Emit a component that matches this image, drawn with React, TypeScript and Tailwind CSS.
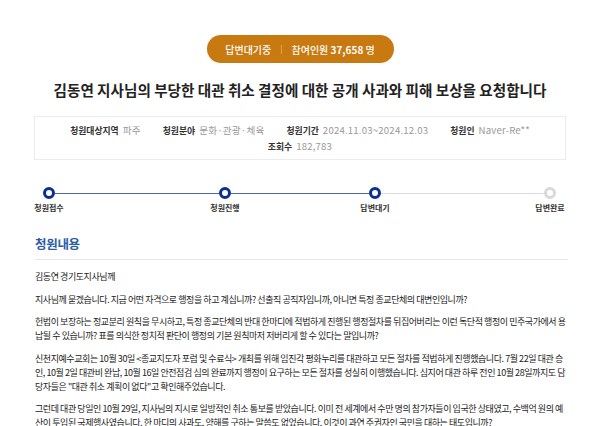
import React from 'react';

const font = { fontFamily: "'Noto Sans CJK KR', 'Noto Sans', sans-serif" };

const info = [
  { label: '청원대상지역', value: '파주' },
  { label: '청원분야', value: '문화·관광·체육' },
  { label: '청원기간', value: '2024.11.03~2024.12.03' },
  { label: '청원인', value: 'Naver-Re**' },
  { label: '조회수', value: '182,783' },
];

const steps = [
  { name: '청원접수', done: true, gap: 'w-[164px]', lineDone: true },
  { name: '청원진행', done: true, gap: 'w-[138px]', lineDone: true },
  { name: '답변대기', done: true, gap: 'w-[163px]', lineDone: false },
  { name: '답변완료', done: false, gap: '', lineDone: false },
];

const paragraphs = [
  '김동연 경기도지사님께',
  '지사님께 묻겠습니다. 지금 어떤 자격으로 행정을 하고 계십니까? 선출직 공직자입니까, 아니면 특정 종교단체의 대변인입니까?',
  '헌법이 보장하는 정교분리 원칙을 무시하고, 특정 종교단체의 반대 한마디에 적법하게 진행된 행정절차를 뒤집어버리는 이런 독단적 행정이 민주국가에서 용납될 수 있습니까? 표를 의식한 정치적 판단이 행정의 기본 원칙마저 저버리게 할 수 있다는 말입니까?',
  '신천지예수교회는 10월 30일 <종교지도자 포럼 및 수료식> 개최를 위해 임진각 평화누리를 대관하고 모든 절차를 적법하게 진행했습니다. 7월 22일 대관 승인, 10월 2일 대관비 완납, 10월 16일 안전점검 심의 완료까지 행정이 요구하는 모든 절차를 성실히 이행했습니다. 심지어 대관 하루 전인 10월 28일까지도 담당자들은 "대관 취소 계획이 없다"고 확인해주었습니다.',
  '그런데 대관 당일인 10월 29일, 지사님의 지시로 일방적인 취소 통보를 받았습니다. 이미 전 세계에서 수만 명의 참가자들이 입국한 상태였고, 수백억 원의 예산이 투입된 국제행사였습니다. 한 마디의 사과도, 양해를 구하는 말씀도 없었습니다. 이것이 과연 주권자인 국민을 대하는 태도입니까?',
];

export default function App() {
  return (
    <div className="h-[426px] w-[600px] overflow-hidden bg-white" style={font}>
      <div className="flex justify-center pt-[35px]">
        <div className="flex h-[28px] w-[187px] items-center justify-center gap-[9px] rounded-full bg-[#c8790f] text-[10px] font-medium text-white">
          <span>답변대기중</span>
          <span className="text-[8px] text-[#e8b878]">|</span>
          <span>
            참여인원 <b className="font-bold">37,658</b> 명
          </span>
        </div>
      </div>

      <h1 className="mt-[17px] text-center text-[14.6px] font-bold leading-[20px] text-[#222]">
        김동연 지사님의 부당한 대관 취소 결정에 대한 공개 사과와 피해 보상을 요청합니다
      </h1>

      <div className="px-[34px]">
        <div className="mt-[16px] flex h-[44px] flex-wrap content-center justify-center gap-x-[22px] gap-y-[1px] border border-[#ececec] px-[30px] leading-[14px]">
          {info.map((it) => (
            <div key={it.label} className="flex items-baseline gap-[4px]">
              <span className="text-[8.8px] font-bold text-[#333]">{it.label}</span>
              <span className="text-[9.6px] tracking-[0.2px] text-[#999]">{it.value}</span>
            </div>
          ))}
        </div>
      </div>

      <div className="mt-[27px] flex items-start pl-[43px]">
        {steps.map((s) => (
          <React.Fragment key={s.name}>
            <div className="flex w-[12px] flex-col items-center">
              <div
                className={`h-[12px] w-[12px] rounded-full border-[3px] bg-white ${
                  s.done ? 'border-[#0c2f8f]' : 'border-[#d9d9d9]'
                }`}
              />
              <span className="mt-[3px] whitespace-nowrap text-[8px] font-bold leading-[12px] text-[#333]">
                {s.name}
              </span>
            </div>
            {s.gap && (
              <div
                className={`mt-[6px] h-px ${s.gap} ${s.lineDone ? 'bg-[#4b67ad]' : 'bg-[#dcdcdc]'}`}
              />
            )}
          </React.Fragment>
        ))}
      </div>

      <div className="pl-[35px] pr-[32px]">
        <h2 className="mt-[21px] border-b border-[#e6e6e6] pb-[6px] text-[12.5px] font-bold leading-[18px] tracking-[-0.3px] text-[#2b5ca6]">
          청원내용
        </h2>
        <div className="mt-[10px] flex flex-col gap-[8.5px] text-[9px] leading-[14px] tracking-[-0.44px] text-[#222]">
          {paragraphs.map((p, i) => (
            <p key={i}>{p}</p>
          ))}
        </div>
      </div>
    </div>
  );
}
